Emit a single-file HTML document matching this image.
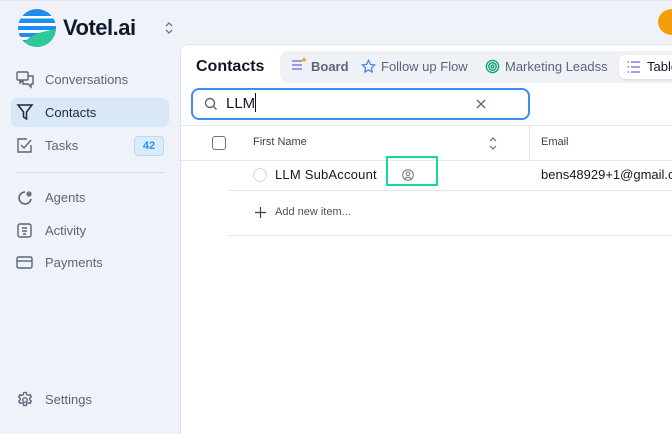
<!DOCTYPE html>
<html><head><style>
*{box-sizing:border-box;margin:0;padding:0}
body{width:672px;height:427px;overflow:hidden;background:#eff3f9;font-family:"Liberation Sans",sans-serif;position:relative}
.abs{position:absolute}
.nav{position:absolute;left:45px;font-size:13px;color:#5b6577}
.ico{position:absolute;left:16px}
</style></head><body>
<div class="abs" style="left:0;top:0;width:672px;height:1px;background:#dfe4ec"></div>
<svg class="abs" style="left:17px;top:8px" width="40" height="40" viewBox="0 0 40 40">
<defs><clipPath id="c"><circle cx="20" cy="20" r="19"/></clipPath></defs>
<g clip-path="url(#c)">
<rect width="40" height="40" fill="#1f8cf0"/>
<rect y="8" width="40" height="2.5" fill="#fff"/>
<rect y="15" width="40" height="3" fill="#fff"/>
<rect y="22" width="40" height="3" fill="#fff"/>
<rect y="29" width="40" height="3" fill="#fff"/>
<path d="M4 40 C10 27 22 24 40 21 L40 40Z" fill="#2ec99a"/>
</g></svg>
<div class="abs" style="left:63px;top:15px;font-size:22px;font-weight:bold;color:#0f1b2d;letter-spacing:-0.5px">Votel.ai</div>
<svg class="abs" style="left:164px;top:21px" width="10" height="14" viewBox="0 0 10 14"><path d="M2 5l3-3 3 3M2 9l3 3 3-3" stroke="#6b7280" stroke-width="1.3" fill="none"/></svg>
<div class="abs" style="left:658px;top:9px;width:28px;height:26px;border-radius:50%;background:#f59e0b"></div>

<svg class="ico" style="top:70px" width="19" height="19" viewBox="0 0 19 19" fill="none" stroke="#5b6577" stroke-width="1.4"><rect x="1" y="2" width="11" height="8" rx="1"/><path d="M4 10v3l3-3M12 6h5v8h-2v3l-3-3H7v-4"/></svg>
<div class="nav" style="top:72px">Conversations</div>
<div class="abs" style="left:11px;top:98px;width:158px;height:29px;border-radius:6px;background:#d8e8f7"></div>
<svg class="ico" style="top:103px" width="18" height="18" viewBox="0 0 18 18" fill="none" stroke="#1f2937" stroke-width="1.5"><path d="M2 2h14l-5.5 7v7l-3-2V9z"/></svg>
<div class="nav" style="top:105px;color:#1f2937">Contacts</div>
<svg class="ico" style="top:137px" width="17" height="17" viewBox="0 0 17 17" fill="none" stroke="#5b6577" stroke-width="1.4"><path d="M15 8v7H2V2h9"/><path d="M5 8l3 3 7-8"/></svg>
<div class="nav" style="top:138px">Tasks</div>
<div class="abs" style="left:134px;top:136px;width:30px;height:20px;border-radius:4px;background:#d9ecfb;border:1px solid #b7dcf7;color:#2196f3;font-size:11px;font-weight:bold;text-align:center;line-height:18px">42</div>
<div class="abs" style="left:16px;top:172px;width:148px;height:1px;background:#d8dde5"></div>
<svg class="ico" style="top:189px" width="18" height="18" viewBox="0 0 18 18" fill="none" stroke="#5b6577" stroke-width="1.6"><path d="M9 3a6 6 0 1 0 6 7"/><path d="M13 2v6M10 5h6M11 3l4 4M15 3l-4 4" stroke-width="1.1"/></svg>
<div class="nav" style="top:190px">Agents</div>
<svg class="ico" style="top:222px" width="17" height="17" viewBox="0 0 17 17" fill="none" stroke="#5b6577" stroke-width="1.4"><rect x="2" y="2" width="13" height="13" rx="2"/><path d="M6 6h5M6 9h5M7 12h3"/></svg>
<div class="nav" style="top:223px">Activity</div>
<svg class="ico" style="top:255px" width="18" height="15" viewBox="0 0 18 15" fill="none" stroke="#5b6577" stroke-width="1.4"><rect x="1" y="2" width="15" height="11" rx="1.5"/><path d="M1 6h15"/></svg>
<div class="nav" style="top:255px">Payments</div>
<svg class="ico" style="top:391px" width="18" height="18" viewBox="0 0 24 24" fill="none" stroke="#5b6577" stroke-width="1.8"><circle cx="12" cy="12" r="3"/><path d="M10.3 2h3.4l.5 2.6 2 1.1 2.5-.9 1.7 2.9-2 1.8v2.3l2 1.8-1.7 2.9-2.5-.9-2 1.1-.5 2.6h-3.4l-.5-2.6-2-1.1-2.5.9-1.7-2.9 2-1.8V9.7l-2-1.8 1.7-2.9 2.5.9 2-1.1z"/></svg>
<div class="nav" style="top:392px">Settings</div>

<div class="abs" style="left:180px;top:44px;width:500px;height:390px;background:#fff;border-top-left-radius:8px;border-left:1px solid #dde3ec;border-top:1px solid #dde3ec"></div>
<div class="abs" style="left:196px;top:58px;font-size:16px;font-weight:bold;color:#111827">Contacts</div>
<div class="abs" style="left:280px;top:51px;width:400px;height:32px;border-radius:8px;background:#eef1f6"></div>
<svg class="abs" style="left:291px;top:56px" width="16" height="16" viewBox="0 0 16 16"><path d="M1 5h10M1 9h10M1 13h10" stroke="#6d63e0" stroke-width="1.3"/><path d="M13 1l.8 1.7 1.7.3-1.3 1.2.3 1.8-1.5-.9-1.5.9.3-1.8L10.5 3l1.7-.3z" fill="#f59e0b"/></svg>
<div class="abs" style="left:311px;top:59px;font-size:13px;font-weight:bold;color:#5b6577">Board</div>
<svg class="abs" style="left:361px;top:59px" width="15" height="15" viewBox="0 0 16 16"><path d="M8 1.5l2 4.2 4.5.6-3.3 3.1.8 4.5L8 11.7l-4 2.2.8-4.5L1.5 6.3 6 5.7z" fill="none" stroke="#3b82f6" stroke-width="1.3"/></svg>
<div class="abs" style="left:381px;top:59px;font-size:13px;color:#5b6577">Follow up Flow</div>
<svg class="abs" style="left:485px;top:59px" width="15" height="15" viewBox="0 0 16 16" fill="none" stroke="#16a36f" stroke-width="1.5"><circle cx="8" cy="8" r="6.5"/><circle cx="8" cy="8" r="4"/><circle cx="8" cy="8" r="1.5"/></svg>
<div class="abs" style="left:505px;top:59px;font-size:13px;color:#5b6577">Marketing Leadss</div>
<div class="abs" style="left:619px;top:55px;width:60px;height:24px;border-radius:6px;background:#fff;box-shadow:0 1px 2px rgba(0,0,0,.1)"></div>
<svg class="abs" style="left:627px;top:61px" width="14" height="12" viewBox="0 0 14 12"><path d="M4 1h9M4 6h9M4 11h9M0.5 1h1.5M0.5 6h1.5M0.5 11h1.5" stroke="#6d63e0" stroke-width="1.3"/></svg>
<div class="abs" style="left:647px;top:59px;font-size:13px;color:#111827">Table</div>

<div class="abs" style="left:191px;top:88px;width:339px;height:32px;border:2px solid #3b8ff0;border-radius:8px;background:#fff"></div>
<svg class="abs" style="left:204px;top:97px" width="14" height="14" viewBox="0 0 14 14" fill="none" stroke="#5b6577" stroke-width="1.4"><circle cx="6" cy="6" r="4.5"/><path d="M9.5 9.5l3 3"/></svg>
<div class="abs" style="left:226px;top:95px;font-size:15px;color:#111827">LLM</div>
<div class="abs" style="left:255px;top:93px;width:1px;height:19px;background:#111"></div>
<svg class="abs" style="left:476px;top:99px" width="10" height="10" viewBox="0 0 10 10" stroke="#5b6577" stroke-width="1.3"><path d="M1 1l8 8M9 1L1 9"/></svg>

<div class="abs" style="left:181px;top:125px;width:491px;height:1px;background:#e5e7eb"></div>
<div class="abs" style="left:181px;top:160px;width:491px;height:1px;background:#e5e7eb"></div>
<div class="abs" style="left:529px;top:126px;width:1px;height:34px;background:#e5e7eb"></div>
<div class="abs" style="left:212px;top:136px;width:14px;height:14px;border:1.3px solid #6b7280;border-radius:3px"></div>
<div class="abs" style="left:253px;top:136px;font-size:11px;color:#374151">First Name</div>
<svg class="abs" style="left:488px;top:136px" width="10" height="15" viewBox="0 0 10 15" fill="none" stroke="#6b7280" stroke-width="1.2"><path d="M2 5l3-3 3 3M2 10l3 3 3-3"/></svg>
<div class="abs" style="left:541px;top:136px;font-size:11px;color:#374151">Email</div>

<div class="abs" style="left:253px;top:168px;width:14px;height:14px;border:1px solid #d1d5db;border-radius:50%"></div>
<div class="abs" style="left:275px;top:167px;font-size:13px;color:#111827;letter-spacing:0.2px">LLM SubAccount</div>
<div class="abs" style="left:386px;top:156px;width:52px;height:30px;border:2px solid #14d8a0"></div>
<svg class="abs" style="left:402px;top:169px" width="12" height="12" viewBox="0 0 12 12" fill="none" stroke="#6b7280" stroke-width="1"><circle cx="6" cy="6" r="5.3"/><circle cx="6" cy="4.8" r="1.8"/><path d="M2.8 9.8c1-2 5.4-2 6.4 0"/></svg>
<div class="abs" style="left:541px;top:167px;font-size:13px;color:#111827;white-space:nowrap">bens48929+1@gmail.com</div>
<div class="abs" style="left:228px;top:190px;width:444px;height:1px;background:#e5e7eb"></div>
<svg class="abs" style="left:255px;top:207px" width="11" height="11" viewBox="0 0 11 11" stroke="#374151" stroke-width="1.2"><path d="M5.5 0v11M0 5.5h11"/></svg>
<div class="abs" style="left:275px;top:206px;font-size:11px;color:#4b5563">Add new item...</div>
<div class="abs" style="left:228px;top:235px;width:444px;height:1px;background:#e5e7eb"></div>
</body></html>
